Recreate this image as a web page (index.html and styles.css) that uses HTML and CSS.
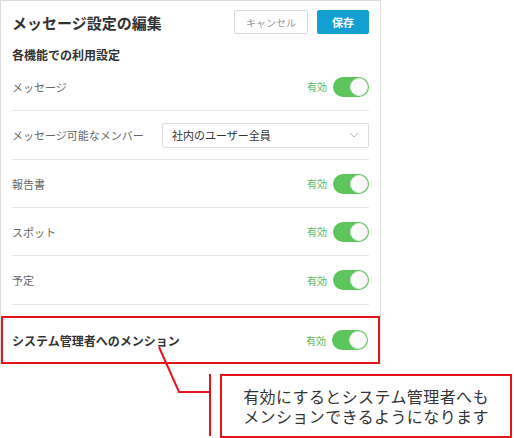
FILE: index.html
```html
<!DOCTYPE html>
<html lang="ja">
    <head>
        <meta charset="UTF-8" />
        <meta name="viewport" content="width=device-width, initial-scale=1.0" />
        <title>メッセージ設定の編集</title>
        <link rel="stylesheet" href="styles.css">
    </head>
    <body>
        <div class="panel">
            <div class="header">
                <h1 class="title">メッセージ設定の編集</h1>
                <div class="actions">
                    <button class="btn cancel">キャンセル</button>
                    <button class="btn save">保存</button>
                </div>
            </div>
            <h2 class="section">各機能での利用設定</h2>
            <div class="row">
                <span class="label">メッセージ</span>
                <span class="state">有効</span>
                <span class="toggle"></span>
            </div>
            <div class="row tall">
                <span class="label">メッセージ可能なメンバー</span>
                <div class="select">
                    <span>社内のユーザー全員</span>
                    <svg class="chevron" width="10" height="6" viewBox="0 0 10 6">
                        <path d="M1 1 L5 5 L9 1" fill="none" stroke="#b5b5b5" stroke-width="1" />
                    </svg>
                </div>
            </div>
            <div class="row">
                <span class="label">報告書</span>
                <span class="state">有効</span>
                <span class="toggle"></span>
            </div>
            <div class="row">
                <span class="label">スポット</span>
                <span class="state">有効</span>
                <span class="toggle"></span>
            </div>
            <div class="row tall">
                <span class="label">予定</span>
                <span class="state">有効</span>
                <span class="toggle"></span>
            </div>
            <div class="row highlight">
                <span class="label strong">システム管理者へのメンション</span>
                <span class="state">有効</span>
                <span class="toggle"></span>
            </div>
        </div>
        <div class="callout">
            <div class="bar"></div>
            <div class="note">有効にするとシステム管理者へも<br>メンションできるようになります</div>
        </div>
        <svg class="connector" width="60" height="50" viewBox="0 0 60 50">
            <polyline points="1,1 21,46 52,46" fill="none" stroke="#e8141b" stroke-width="2" />
        </svg>
    </body>
</html>
```

FILE: styles.css
```css
body {
    margin: 0;
    width: 514px;
    height: 438px;
    overflow: hidden;
    position: relative;
    background: #fff;
    font-family: "Noto Sans CJK JP", "Noto Sans", sans-serif;
    color: #444;
}
.panel {
    width: 357px;
    border: 1px solid #dcdcdc;
    border-bottom: none;
    padding: 0 11px;
}
.header {
    display: flex;
    align-items: center;
    justify-content: space-between;
    padding: 9px 0 11px;
}
.title {
    margin: 0;
    font-size: 15px;
    font-weight: 700;
    color: #333;
}
.actions {
    display: flex;
    gap: 9px;
}
.btn {
    height: 24px;
    border-radius: 2px;
    font-family: inherit;
    font-size: 10px;
    padding: 0;
    cursor: pointer;
}
.cancel {
    width: 74px;
    background: #fff;
    border: 1px solid #d8d8d8;
    color: #999;
}
.save {
    width: 52px;
    background: #13a0d0;
    border: 1px solid #13a0d0;
    color: #fff;
    font-weight: 700;
    font-size: 11px;
}
.section {
    margin: 2px 0 0;
    font-size: 12px;
    font-weight: 700;
    color: #333;
    line-height: 16px;
}
.row {
    display: flex;
    align-items: center;
    height: 47px;
    border-bottom: 1px solid #e6e6e6;
}
.row.tall {
    height: 48px;
}
.label {
    flex: 1;
    font-size: 11px;
    color: #666;
}
.label.strong {
    font-size: 12px;
    font-weight: 700;
    color: #333;
}
.state {
    font-size: 10px;
    color: #5cb85c;
    margin-right: 6px;
}
.toggle {
    position: relative;
    width: 36px;
    height: 20px;
    border-radius: 10px;
    background: #5cc65c;
}
.toggle::after {
    content: "";
    position: absolute;
    right: 1px;
    top: 1px;
    width: 16px;
    height: 16px;
    border-radius: 50%;
    background: #fbfbfb;
    border: 1px solid #e8e8e8;
}
.select {
    width: 187px;
    height: 23px;
    border: 1px solid #dedede;
    border-radius: 2px;
    display: flex;
    align-items: center;
    justify-content: space-between;
    padding: 0 9px;
    font-size: 11px;
    color: #333;
}
.highlight {
    margin: 11px -11px 0;
    height: 44px;
    border: 2px solid #e8141b;
    padding: 0 10px 0 9px;
}
.callout {
    display: flex;
    margin: 10px 0 0 209px;
}
.bar {
    width: 2px;
    height: 62px;
    background: #e8141b;
    margin-right: 9px;
}
.note {
    width: 288px;
    height: 60px;
    border: 2px solid #e8141b;
    display: flex;
    align-items: center;
    justify-content: center;
    text-align: center;
    font-size: 16px;
    line-height: 20px;
    letter-spacing: 0.4px;
    color: #333;
}
.connector {
    position: absolute;
    left: 158px;
    top: 346px;
}
```
